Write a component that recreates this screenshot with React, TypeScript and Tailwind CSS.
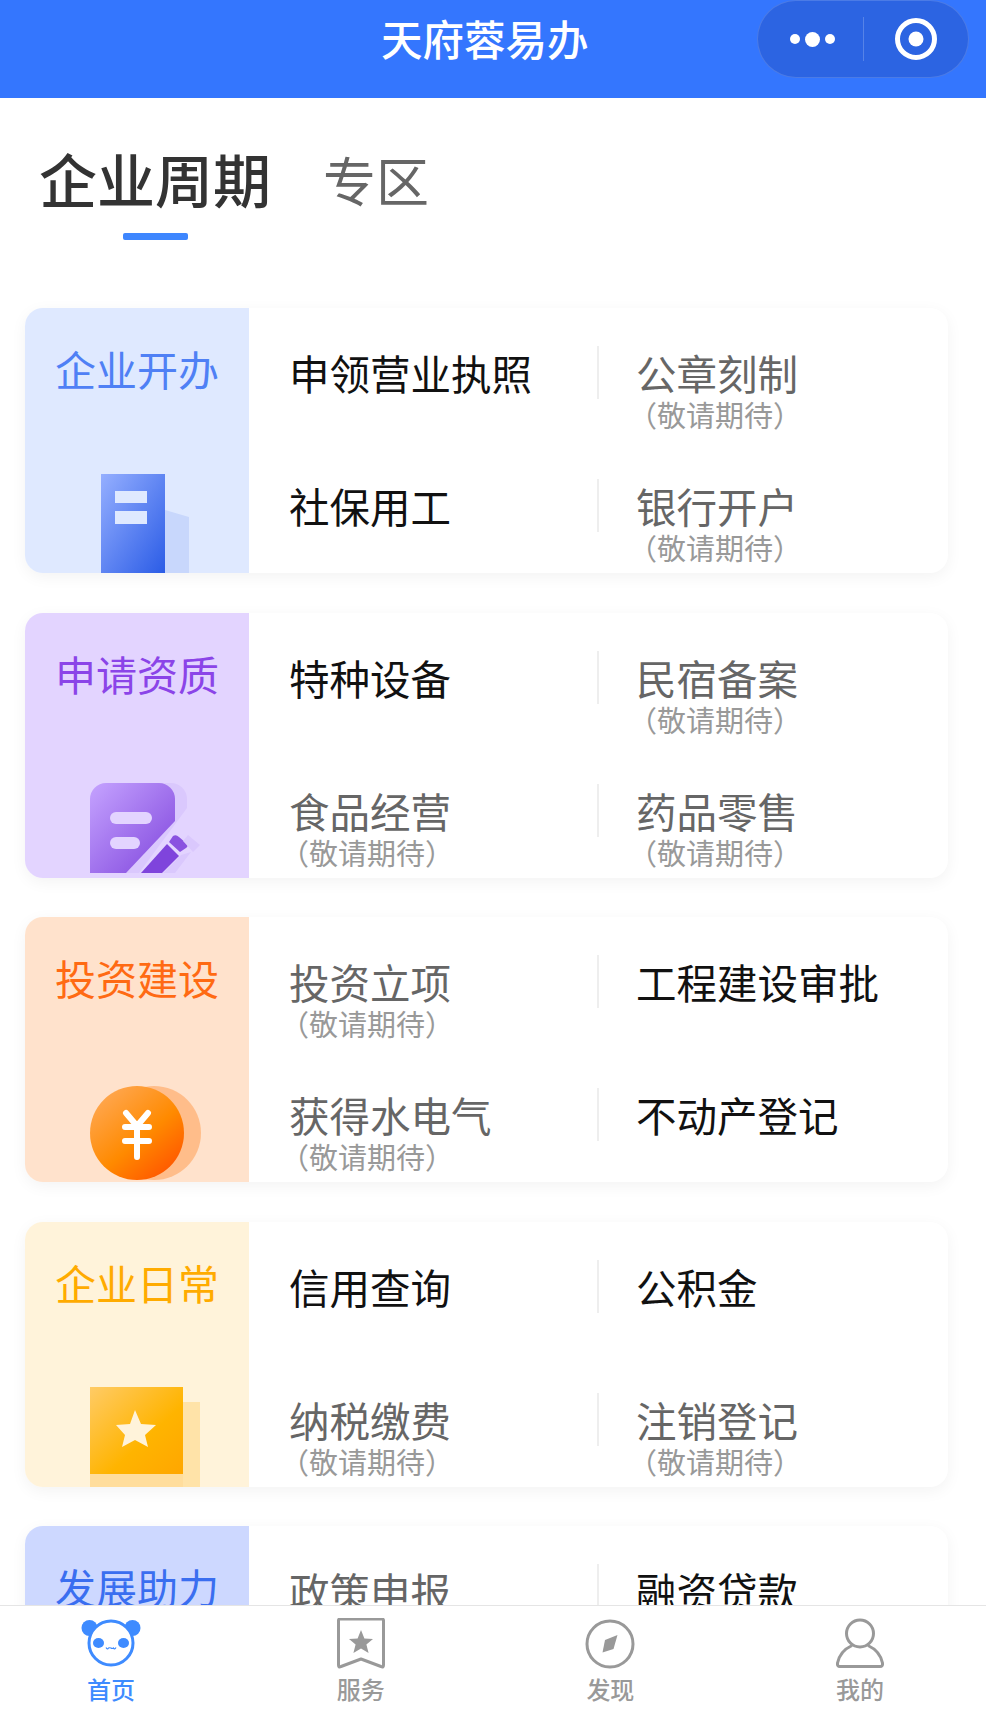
import React from 'react'

type Item = { name: string; soon?: boolean }

function BuildingIcon() {
  return (
    <svg viewBox="0 0 224 110" className="block w-[224px] h-[110px]">
      <defs>
        <linearGradient id="bld" x1="0" y1="0" x2="1" y2="1">
          <stop offset="0" stopColor="#95afff" />
          <stop offset="1" stopColor="#2b5ce6" />
        </linearGradient>
      </defs>
      <path d="M140 47 L164 54 V110 H140 Z" fill="#c8d7fc" />
      <rect x="76" y="11" width="64" height="99" fill="url(#bld)" />
      <rect x="90" y="28" width="32" height="12" fill="#dfe9ff" />
      <rect x="90" y="48" width="32" height="13" fill="#dfe9ff" />
    </svg>
  )
}

function NoteIcon() {
  return (
    <svg viewBox="0 0 224 110" className="block w-[224px] h-[110px]">
      <defs>
        <linearGradient id="note" x1="0" y1="0" x2="1" y2="1">
          <stop offset="0" stopColor="#c5a3ff" />
          <stop offset="1" stopColor="#7f44dc" />
        </linearGradient>
      </defs>
      <path d="M90 15 H146 A16 16 0 0 1 162 31 V40 L114 105 H90 Z" fill="#dac8fd" />
      <path d="M81 15 H134 A16 16 0 0 1 150 31 V53 L101 105 H65 V31 A16 16 0 0 1 81 15 Z" fill="url(#note)" />
      <rect x="85" y="44" width="42" height="12" rx="6" fill="#e3d4ff" />
      <rect x="85" y="69" width="30" height="12" rx="6" fill="#e3d4ff" />
      <path d="M142 76 L154 88 L137 105 H116 Z" fill="#7f44dc" />
      <path d="M148 68 Q151 66 154 69 L161 75 Q164 78 161 80 L155 84 L144 74 Z" fill="#8a52e0" />
      <path d="M138 105 L156 87 L166 84 L150 105 Z M163 67 L175 77 L168 84 L158 73 Z" fill="#dac8fd" />
    </svg>
  )
}

function CoinIcon() {
  return (
    <svg viewBox="0 0 224 110" className="block w-[224px] h-[110px]">
      <defs>
        <linearGradient id="coin" x1="0.15" y1="0.1" x2="0.85" y2="0.95">
          <stop offset="0" stopColor="#ffa64d" />
          <stop offset="0.55" stopColor="#ff8a00" />
          <stop offset="1" stopColor="#ff5500" />
        </linearGradient>
      </defs>
      <circle cx="129" cy="61" r="47" fill="#ffbd8a" />
      <circle cx="112" cy="61" r="47" fill="url(#coin)" />
      <path d="M101 41 L112 54 L123 41 M100 55 H124 M100 69 H124 M112 54 V85" fill="none" stroke="#fff" strokeWidth="6" strokeLinecap="round" strokeLinejoin="round" />
    </svg>
  )
}

function StarIcon() {
  return (
    <svg viewBox="0 0 224 110" className="block w-[224px] h-[110px]">
      <defs>
        <linearGradient id="star" x1="0" y1="0" x2="1" y2="1">
          <stop offset="0" stopColor="#ffcb66" />
          <stop offset="0.6" stopColor="#ffb400" />
          <stop offset="1" stopColor="#ffa600" />
        </linearGradient>
      </defs>
      <rect x="158" y="25" width="17" height="85" fill="#ffe3a8" />
      <rect x="65" y="97" width="93" height="13" fill="#ffdd9c" />
      <rect x="65" y="10" width="93" height="87" fill="url(#star)" />
      <path d="M110 33 L116 47 L131 48 L120 58 L123 70 L110 63 L97 70 L100 58 L91 48 L105 47 Z" fill="#fff3da" />
    </svg>
  )
}

const cards: { title: string; panel: string; color: string; icon: React.ReactNode; items: Item[] }[] = [
  {
    title: '企业开办',
    panel: 'bg-[#dfe9ff]',
    color: 'text-[#4f80f5]',
    icon: <BuildingIcon />,
    items: [{ name: '申领营业执照' }, { name: '公章刻制', soon: true }, { name: '社保用工' }, { name: '银行开户', soon: true }],
  },
  {
    title: '申请资质',
    panel: 'bg-[#e3d4ff]',
    color: 'text-[#8b44e8]',
    icon: <NoteIcon />,
    items: [{ name: '特种设备' }, { name: '民宿备案', soon: true }, { name: '食品经营', soon: true }, { name: '药品零售', soon: true }],
  },
  {
    title: '投资建设',
    panel: 'bg-[#ffe2cc]',
    color: 'text-[#ff6a13]',
    icon: <CoinIcon />,
    items: [{ name: '投资立项', soon: true }, { name: '工程建设审批' }, { name: '获得水电气', soon: true }, { name: '不动产登记' }],
  },
  {
    title: '企业日常',
    panel: 'bg-[#fff3da]',
    color: 'text-[#ffab00]',
    icon: <StarIcon />,
    items: [{ name: '信用查询' }, { name: '公积金' }, { name: '纳税缴费', soon: true }, { name: '注销登记', soon: true }],
  },
  {
    title: '发展助力',
    panel: 'bg-[#cdd8ff]',
    color: 'text-[#3a6ef0]',
    icon: null,
    items: [{ name: '政策申报', soon: true }, { name: '融资贷款' }],
  },
]

function Cell({ item, right }: { item: Item; right: boolean }) {
  return (
    <div className={right ? 'pl-0' : 'pl-[40px]'}>
      <div className={'h-[53px] leading-[53px] text-[40.5px] whitespace-nowrap ' + (right ? 'border-l-2 border-[#eeeeee] pl-[37px] ' : '') + (item.soon ? 'text-[#666666]' : 'text-[#111111]')}>
        {item.name}
      </div>
      {item.soon && (
        <div className={'h-[30px] leading-[30px] text-[29px] text-[#999999] whitespace-nowrap ' + (right ? 'ml-[31px]' : 'ml-[-9px]')}>（敬请期待）</div>
      )}
    </div>
  )
}

function Card({ card }: { card: (typeof cards)[number] }) {
  return (
    <div className="flex h-[265px] shrink-0 rounded-[18px] bg-white overflow-hidden shadow-[0_4px_16px_rgba(0,0,0,0.05)]">
      <div className={'w-[224px] shrink-0 flex flex-col ' + card.panel}>
        <div className={'pt-[34px] text-center text-[41px] leading-[52px] ' + card.color}>{card.title}</div>
        <div className="mt-auto">{card.icon}</div>
      </div>
      <div className="flex-1 grid grid-cols-[348px_1fr] auto-rows-[133px] pt-[38px]">
        {card.items.map((item, i) => (
          <Cell key={item.name} item={item} right={i % 2 === 1} />
        ))}
      </div>
    </div>
  )
}

function PandaIcon() {
  return (
    <svg viewBox="-2 0 60 52" className="mx-[-2px] w-[60px] h-[52px]">
      <circle cx="6.5" cy="10" r="8" fill="#3e8bff" />
      <circle cx="49.5" cy="10" r="8" fill="#3e8bff" />
      <circle cx="28" cy="25" r="22" fill="#fff" stroke="#3e8bff" strokeWidth="3" />
      <ellipse cx="15.5" cy="25" rx="5.5" ry="5" fill="#3e8bff" />
      <ellipse cx="40.5" cy="25" rx="5.5" ry="5" fill="#3e8bff" />
      <path d="M23 29.5 q1.5 2.5 2.5 0.5 q1 -0.5 2.5 0 q1 1 2.5 0 q1 2 2.5 -0.5" fill="none" stroke="#3e8bff" strokeWidth="1.2" />
    </svg>
  )
}

function BookmarkIcon() {
  return (
    <svg viewBox="0 0 56 52" className="w-[56px] h-[52px]">
      <path d="M7 1 Q5.5 1 5.5 2.5 V47 Q5.5 50 8 48.5 L28 41 L48 48.5 Q50.5 50 50.5 47 V2.5 Q50.5 1 49 1 Z" fill="none" stroke="#999" strokeWidth="3" strokeLinejoin="round" />
      <path d="M28 12 L31.4 20.5 L40 21 L33.4 26.6 L35.6 35 L28 30.4 L20.4 35 L22.6 26.6 L16 21 L24.6 20.5 Z" fill="#999" />
    </svg>
  )
}

function CompassIcon() {
  return (
    <svg viewBox="0 0 56 52" className="w-[56px] h-[52px]">
      <circle cx="28" cy="26" r="23" fill="none" stroke="#999" strokeWidth="3" />
      <path d="M35.5 17 L23 22 L20.5 34.5 L31.5 31 Z" fill="#999" />
    </svg>
  )
}

function UserIcon() {
  return (
    <svg viewBox="0 0 56 52" className="w-[56px] h-[52px]">
      <circle cx="28" cy="15.5" r="13.5" fill="none" stroke="#999" strokeWidth="3" />
      <path d="M20 27.5 Q8 33 5.5 45 Q5 48.5 8 48.5 H48 Q51 48.5 50.5 45 Q48 33 36 27.5" fill="none" stroke="#999" strokeWidth="3" strokeLinejoin="round" />
    </svg>
  )
}

const tabs = [
  { label: '首页', icon: <PandaIcon />, active: true },
  { label: '服务', icon: <BookmarkIcon /> },
  { label: '发现', icon: <CompassIcon /> },
  { label: '我的', icon: <UserIcon /> },
]

export default function App() {
  return (
    <div className="w-[986px] h-[1721px] flex flex-col overflow-hidden bg-white font-['Noto_Sans_CJK_SC','Noto_Sans',sans-serif]">
      <header className="h-[98px] shrink-0 flex items-start bg-[#3476fe]">
        <div className="ml-[381px] h-[77px] leading-[77px] text-[41.5px] font-medium text-white">天府蓉易办</div>
        <div className="ml-auto mr-[17px] h-[78px] w-[212px] flex items-center rounded-full border border-white/15 bg-[#2c64e2]">
          <div className="w-[105px] pl-[3px] flex justify-center items-center gap-[5px]">
            <span className="w-[10px] h-[10px] rounded-full bg-white" />
            <span className="w-[15px] h-[15px] rounded-full bg-white" />
            <span className="w-[10px] h-[10px] rounded-full bg-white" />
          </div>
          <div className="w-px h-[44px] bg-white/20" />
          <div className="flex-1 flex justify-center">
            <svg viewBox="0 0 44 44" className="w-[44px] h-[44px]">
              <circle cx="22" cy="22" r="18.5" fill="none" stroke="#fff" strokeWidth="5" />
              <circle cx="22" cy="22" r="7.5" fill="#fff" />
            </svg>
          </div>
        </div>
      </header>

      <main className="flex-1 min-h-0 overflow-hidden">
        <div className="flex items-end pl-[39px] pt-[41px]">
          <div className="flex flex-col items-center">
            <div className="h-[78px] leading-[78px] text-[58px] font-medium text-[#333333]">企业周期</div>
            <div className="mt-[16px] h-[7px] w-[65px] rounded-[2px] bg-[#3e86fe]" />
          </div>
          <div className="ml-[52px] mb-[22px] h-[78px] leading-[78px] text-[53px] text-[#666666]">专区</div>
        </div>
        <div className="mt-[68px] ml-[25px] mr-[38px] flex flex-col gap-[39.5px]">
          {cards.map((card) => (
            <Card key={card.title} card={card} />
          ))}
        </div>
      </main>

      <nav className="h-[116px] shrink-0 flex gap-[193.7px] pl-[83px] border-t border-[#e5e5e5] bg-white">
        {tabs.map((tab) => (
          <div key={tab.label} className="w-[56px] shrink-0 flex flex-col items-center pt-[12px]">
            {tab.icon}
            <div className={'mt-[3px] leading-[32px] text-[24px] font-medium ' + (tab.active ? 'text-[#3e8bff]' : 'text-[#999999]')}>{tab.label}</div>
          </div>
        ))}
      </nav>
    </div>
  )
}
